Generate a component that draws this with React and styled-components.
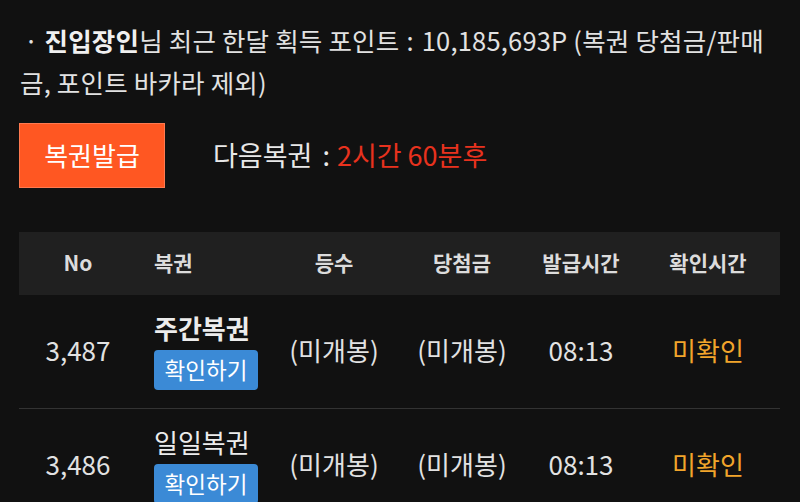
import React from 'react'
import styled, { createGlobalStyle } from 'styled-components'

const GlobalStyle = createGlobalStyle`
  html, body {
    margin: 0;
    padding: 0;
    background: #111111;
  }
  body {
    font-family: "Noto Sans CJK KR", "Noto Sans", sans-serif;
    color: #e2e2e2;
  }
`

const Page = styled.div`
  padding: 19px 20px 0 20px;
`

const Notice = styled.p`
  margin: 0;
  font-size: 25.5px;
  line-height: 42px;
  letter-spacing: 0.2px;
  white-space: nowrap;
`

const Bullet = styled.span`
  margin: 0 6px 0 4px;
`

const Strong = styled.b`
  font-weight: 700;
  color: #f0f0f0;
`

const Colon = styled.span`
  margin: ${p => p.m || '0 8px 0 7px'};
`

const IssueRow = styled.div`
  display: flex;
  align-items: center;
  gap: 48px;
  margin-top: 20px;
  margin-left: -1px;
`

const IssueButton = styled.button`
  width: 146px;
  height: 65px;
  border: 1px solid #ff7a50;
  background: #ff5722;
  color: #ffffff;
  font-family: inherit;
  font-size: 26px;
  padding: 0 0 3px;
  cursor: pointer;
`

const NextText = styled.span`
  font-size: 27px;
  color: #e8e8e8;
  padding-bottom: 3px;
`

const Remain = styled.span`
  color: #e8321e;
`

const Table = styled.div`
  margin-top: 44px;
  margin-left: -1px;
  width: 761px;
`

const Grid = styled.div`
  display: grid;
  grid-template-columns: 118px 133px 128px 128px 110px 144px;
  align-items: center;
  height: ${p => p.h}px;
  background: ${p => p.bg || 'transparent'};
  border-bottom: 1px solid ${p => p.line || 'transparent'};
`

const HeadCell = styled.div`
  font-size: 21px;
  font-weight: 700;
  color: #dcdcdc;
  text-align: ${p => (p.left ? 'left' : 'center')};
  padding-left: ${p => (p.left ? '17px' : '0')};
  padding-bottom: 3px;
`

const Cell = styled.div`
  font-size: 26px;
  color: ${p => p.color || '#e2e2e2'};
  text-align: center;
  padding-bottom: 5px;
`

const TicketCell = styled.div`
  display: flex;
  flex-direction: column;
  align-items: flex-start;
  padding-left: 17px;
  gap: 4px;
`

const TicketName = styled.span`
  font-size: 26px;
  font-weight: ${p => (p.bold ? 700 : 400)};
  color: #ececec;
  line-height: 32px;
  position: relative;
  top: -2px;
`

const CheckButton = styled.button`
  width: 104px;
  height: 40px;
  border: none;
  border-radius: 4px;
  background: #3b8ad6;
  color: #ffffff;
  font-family: inherit;
  font-size: 22.5px;
  padding: 0 0 2px;
`

const rows = [
  { no: '3,487', name: '주간복권', bold: true },
  { no: '3,486', name: '일일복권', bold: false },
]

export default function App() {
  return (
    <Page>
      <GlobalStyle />
      <Notice>
        <Bullet>·</Bullet>
        <Strong>진입장인</Strong>님 최근 한달 획득 포인트<Colon>:</Colon>10,185,693P (복권 당첨금/판매
        <br />
        금, 포인트 바카라 제외)
      </Notice>
      <IssueRow>
        <IssueButton>복권발급</IssueButton>
        <NextText>
          다음복권<Colon m="0 7px 0 10px">:</Colon><Remain>2시간 60분후</Remain>
        </NextText>
      </IssueRow>
      <Table>
        <Grid h={62} bg="#202020">
          <HeadCell>No</HeadCell>
          <HeadCell left>복권</HeadCell>
          <HeadCell>등수</HeadCell>
          <HeadCell>당첨금</HeadCell>
          <HeadCell>발급시간</HeadCell>
          <HeadCell>확인시간</HeadCell>
        </Grid>
        {rows.map(r => (
          <Grid key={r.no} h={113} line="#333333">
            <Cell>{r.no}</Cell>
            <TicketCell>
              <TicketName bold={r.bold}>{r.name}</TicketName>
              <CheckButton>확인하기</CheckButton>
            </TicketCell>
            <Cell>(미개봉)</Cell>
            <Cell>(미개봉)</Cell>
            <Cell>08:13</Cell>
            <Cell color="#f2a52b">미확인</Cell>
          </Grid>
        ))}
      </Table>
    </Page>
  )
}
